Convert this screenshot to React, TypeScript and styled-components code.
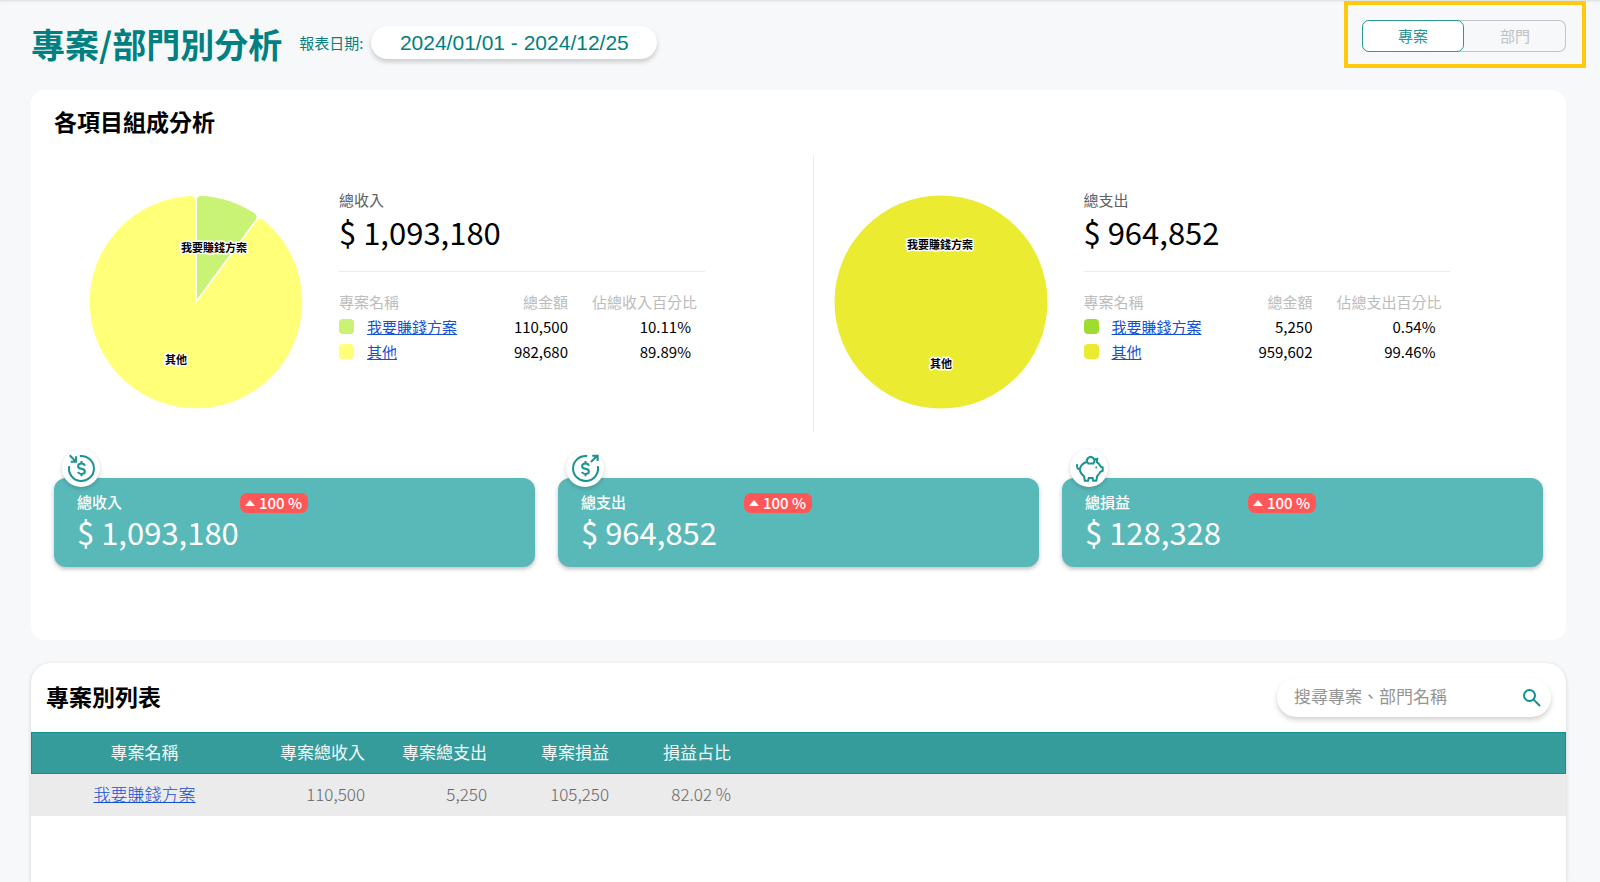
import React, { useState } from "react";
import styled, { createGlobalStyle, css } from "styled-components";

const GlobalStyle = createGlobalStyle`
  *, *::before, *::after { box-sizing: border-box; }
  body {
    margin: 0;
    background: #f7f8fa;
    color: #000;
    font-family: "Noto Sans CJK TC", "Noto Sans", sans-serif;
    font-size: 15px;
    line-height: 24px;
  }
  h1, h2, p { margin: 0; }
  button, input { font: inherit; }
`;

const Page = styled.div`
  display: flex;
  flex-direction: column;
  min-height: 100vh;
  padding: 0 34px 0 31px;
  box-shadow: inset 0 3px 3px -2px rgba(0, 0, 0, 0.12);
`;

const Header = styled.header`
  display: flex;
  align-items: center;
  justify-content: space-between;
  height: 90px;
`;

const HeaderGroup = styled.div`
  display: flex;
  align-items: center;
`;

const PageTitle = styled.h1`
  margin-bottom: 2px;
  color: #008080;
  font-size: 34px;
  line-height: 44px;
  font-weight: 700;
  white-space: nowrap;
`;

const DateLabel = styled.label`
  margin: 0 8px 4px 17px;
  color: #0b7f7f;
`;

const DateInput = styled.input`
  width: 286px;
  height: 33px;
  margin-bottom: 5px;
  padding: 0;
  border: 0;
  border-radius: 17px;
  background: #fff;
  color: #007f7f;
  font-family: "Liberation Sans", Arial, sans-serif;
  font-size: 21px;
  text-align: center;
  box-shadow: 0 3px 5px rgba(0, 0, 0, 0.18);
`;

const SwitchFrame = styled.div`
  position: relative;
  margin-bottom: 18px;

  &::after {
    content: "";
    position: absolute;
    inset: -19px -20px -16px -18px;
    border: 4px solid #ffc90e;
    pointer-events: none;
  }
`;

const SwitchGroup = styled.div`
  display: flex;
  height: 32px;
  border-radius: 7px;
  box-shadow: inset 0 0 0 1px #c2c4c6;
`;

const SwitchButton = styled.button<{ $active: boolean }>`
  width: 102px;
  padding: 0;
  border: 1px solid transparent;
  border-radius: 7px;
  background: transparent;
  color: #c0c0c0;
  cursor: pointer;
  ${(p) =>
    p.$active &&
    css`
      border-color: #2a9999;
      background: #fff;
      color: #2a9494;
    `}
`;

const Panel = styled.section`
  margin-bottom: 23px;
  padding: 17px 23px 73px;
  border-radius: 14px;
  background: #fff;
`;

const SectionTitle = styled.h2`
  padding-bottom: 3px;
  font-size: 23px;
  line-height: 28px;
  font-weight: 700;
`;

const Charts = styled.div`
  display: grid;
  grid-template-columns: 1fr 1fr;
  margin-top: 17px;
`;

const ChartBlock = styled.div<{ $divided?: boolean }>`
  display: flex;
  height: 277px;
  padding: 40px 0 0 35px;
  ${(p) =>
    p.$divided &&
    css`
      margin-left: 14px;
      padding-left: 20px;
      border-left: 1px solid #ececec;
    `}
`;

const Pie = styled.svg`
  flex: none;
  width: 214px;
  height: 214px;
  margin-right: 36px;
  overflow: visible;
`;

const PieLabel = styled.text`
  font-size: 11px;
  font-weight: 700;
  text-anchor: middle;
  dominant-baseline: central;
  stroke: #fff;
  stroke-width: 3px;
  stroke-linejoin: round;
  paint-order: stroke;
`;

const Summary = styled.div`
  width: 366px;
`;

const SummaryLabel = styled.p`
  line-height: 20px;
  margin-top: -5px;
  color: #606060;
`;

const SummaryAmount = styled.p`
  padding: 1px 0 18px;
  border-bottom: 1px solid #ebebeb;
  font-size: 31px;
  line-height: 42px;
`;

const Breakdown = styled.table`
  width: 100%;
  margin-top: 17px;
  border-collapse: collapse;
  table-layout: fixed;

  th, td {
    height: 25px;
    padding: 0;
    line-height: 25px;
    font-weight: 400;
    text-align: right;
    white-space: nowrap;
  }
  th { color: #bcbcbc; }
  th:first-child, td:first-child { width: 129px; text-align: left; }
  th:nth-child(2), td:nth-child(2) { width: 100px; }
  th:last-child { padding-right: 8px; }
  td:last-child { padding-right: 14px; }
`;

const NameCell = styled.span`
  display: flex;
  align-items: center;
  gap: 13px;
`;

const Swatch = styled.span<{ $color: string }>`
  width: 15px;
  height: 15px;
  border-radius: 4px;
  background: ${(p) => p.$color};
`;

const Link = styled.a`
  color: #1450d2;
  text-decoration: underline;
`;

const Cards = styled.div`
  display: grid;
  grid-template-columns: repeat(3, 1fr);
  gap: 23px;
  margin-top: 46px;
`;

const Card = styled.article`
  position: relative;
  display: grid;
  grid-template-columns: 163px 1fr;
  align-content: start;
  height: 89px;
  padding: 14px 23px 0;
  border-radius: 12px;
  background: #59b9b9;
  color: #fff;
  box-shadow: 0 2px 4px rgba(0, 0, 0, 0.25);
`;

const CardIcon = styled.span`
  position: absolute;
  top: -29px;
  left: 8px;
  display: flex;
  align-items: center;
  justify-content: center;
  width: 38px;
  height: 38px;
  border-radius: 50%;
  background: #fff;
  box-shadow: 0 2px 4px rgba(0, 0, 0, 0.18);
`;

const Glyph = styled.svg`
  width: 27px;
  height: 27px;
  fill: none;
  stroke: #1c9393;
  stroke-width: 6;
  overflow: visible;
`;

const CardLabel = styled.p`
  line-height: 20px;
  font-weight: 500;
`;

const CardAmount = styled.p`
  grid-column: 1 / -1;
  font-size: 31px;
  line-height: 38px;
`;

const Tag = styled.span`
  display: inline-flex;
  align-items: center;
  justify-self: start;
  gap: 4px;
  height: 20px;
  margin-top: 1px;
  padding: 0 6px 0 5px;
  border-radius: 7px;
  background: #ff5757;
  font-weight: 500;
  line-height: 20px;
`;

const Caret = styled.svg`
  width: 10px;
  height: 6px;
  fill: #fff;
`;

const ListPanel = styled.section`
  flex: 1;
  min-height: 219px;
  border-radius: 20px 20px 0 0;
  background: #fff;
  box-shadow: 0 1px 4px rgba(0, 0, 0, 0.16);
`;

const ListHeader = styled.div`
  display: flex;
  align-items: center;
  justify-content: space-between;
  height: 69px;
  padding: 0 15px;
`;

const SearchBox = styled.div`
  display: flex;
  align-items: center;
  width: 274px;
  height: 39px;
  padding: 0 7px 0 17px;
  border-radius: 20px;
  background: #fff;
  box-shadow: 0 3px 5px rgba(0, 0, 0, 0.18);
`;

const SearchInput = styled.input`
  flex: 1;
  min-width: 0;
  padding: 0 0 3px;
  border: 0;
  outline: 0;
  background: transparent;
  font-size: 17px;
  &::placeholder { color: #949494; opacity: 1; }
`;

const SearchButton = styled.button`
  display: flex;
  padding: 0;
  border: 0;
  background: transparent;
  color: #0d9090;
  cursor: pointer;
`;

const SearchGlyph = styled.svg`
  width: 24px;
  height: 24px;
  fill: none;
  stroke: currentColor;
  stroke-width: 2;
`;

const ProjectTable = styled.table`
  width: 100%;
  border-collapse: collapse;
  table-layout: fixed;
  font-size: 17px;

  th, td {
    width: 122px;
    height: 42px;
    padding: 0 15px 2px 0;
    font-weight: 300;
    text-align: right;
    white-space: nowrap;
  }
  th:first-child, td:first-child { width: 227px; padding: 0 0 2px; text-align: center; }
  th:last-child, td:last-child { width: auto; }
  thead tr { background: #369b9b; color: #f2fafa; box-shadow: inset 0 0 0 1px #0f9090; }
  th { font-weight: 400; }
  tbody tr { background: #ebebeb; color: #666; }
`;

const RADIUS = 107;
const CORNER = 6;

/** Outline of a pie slice with rounded outer corners; angles are in degrees, clockwise from the top. */
function slicePath(from: number, to: number) {
  const at = (deg: number, r: number) => {
    const a = ((deg - 90) * Math.PI) / 180;
    return `${(RADIUS + r * Math.cos(a)).toFixed(2)} ${(RADIUS + r * Math.sin(a)).toFixed(2)}`;
  };
  const d = (CORNER / RADIUS) * (180 / Math.PI);
  const large = to - from > 180 ? 1 : 0;
  return [
    `M${RADIUS} ${RADIUS}`,
    `L${at(from, RADIUS - CORNER)}`,
    `Q${at(from, RADIUS)} ${at(from + d, RADIUS)}`,
    `A${RADIUS} ${RADIUS} 0 ${large} 1 ${at(to - d, RADIUS)}`,
    `Q${at(to, RADIUS)} ${at(to, RADIUS - CORNER)}`,
    "Z",
  ].join(" ");
}

const DOLLAR =
  "M40 18V25M40 56V63M50 32C49 28 45 25 40 25C34 25 30 28 30 33C30 38 34 40 40 41C46 42 50 44 50 49C50 54 46 56 40 56C35 56 31 54 30 50";

const IncomeIcon = () => (
  <Glyph viewBox="0 0 80 80" aria-hidden="true">
    <path d="M35 3.3A37 37 0 1 1 3.5 33" />
    <path d="M5 1L23 19M24 4V20H8" />
    <path d={DOLLAR} />
  </Glyph>
);

const ExpenseIcon = () => (
  <Glyph viewBox="0 0 80 80" aria-hidden="true">
    <path d="M76.5 33A37 37 0 1 1 45 3.3" />
    <path d="M56 21L74 3M60 2H76V18" />
    <path d={DOLLAR} />
  </Glyph>
);

const ProfitIcon = () => (
  <Glyph viewBox="0 0 80 80" aria-hidden="true">
    <path d="M32 21C21 24 14 31 11 42C12 51 17 58 24 63L26 76H36L38 68H49L51 76H60L63 62C67 58 70 54 72 50L79 47V37L73 34C71 29 67 24 62 21L63 11C60 11 56 12 54 15" />
    <path d="M34 25H54M35 24A11 11 0 1 1 52 24M11 42C5 42 1 37 4 27" />
    <circle cx="60" cy="37" r="3" fill="#1c9393" stroke="none" />
  </Glyph>
);

type Item = { name: string; amount: string; percent: string; color: string };

function SummaryBlock(props: { label: string; amount: string; percentTitle: string; items: Item[] }) {
  return (
    <Summary>
      <SummaryLabel>{props.label}</SummaryLabel>
      <SummaryAmount>{props.amount}</SummaryAmount>
      <Breakdown>
        <thead>
          <tr>
            <th scope="col">專案名稱</th>
            <th scope="col">總金額</th>
            <th scope="col">{props.percentTitle}</th>
          </tr>
        </thead>
        <tbody>
          {props.items.map((item) => (
            <tr key={item.name}>
              <td>
                <NameCell>
                  <Swatch $color={item.color} />
                  <Link href="#">{item.name}</Link>
                </NameCell>
              </td>
              <td>{item.amount}</td>
              <td>{item.percent}</td>
            </tr>
          ))}
        </tbody>
      </Breakdown>
    </Summary>
  );
}

const incomeItems: Item[] = [
  { name: "我要賺錢方案", amount: "110,500", percent: "10.11%", color: "#c8f374" },
  { name: "其他", amount: "982,680", percent: "89.89%", color: "#ffff78" },
];

const expenseItems: Item[] = [
  { name: "我要賺錢方案", amount: "5,250", percent: "0.54%", color: "#a0dc2d" },
  { name: "其他", amount: "959,602", percent: "99.46%", color: "#ebeb32" },
];

const cards = [
  { label: "總收入", amount: "$ 1,093,180", Icon: IncomeIcon },
  { label: "總支出", amount: "$ 964,852", Icon: ExpenseIcon },
  { label: "總損益", amount: "$ 128,328", Icon: ProfitIcon },
];

export default function App() {
  const [view, setView] = useState("專案");
  const [range, setRange] = useState("2024/01/01 - 2024/12/25");
  const [query, setQuery] = useState("");
  const split = 36.4;

  return (
    <>
      <GlobalStyle />
      <Page>
        <Header>
          <HeaderGroup>
            <PageTitle>專案/部門別分析</PageTitle>
            <DateLabel htmlFor="range">報表日期:</DateLabel>
            <DateInput id="range" value={range} onChange={(e) => setRange(e.target.value)} />
          </HeaderGroup>
          <SwitchFrame>
            <SwitchGroup>
              {["專案", "部門"].map((name) => (
                <SwitchButton
                  key={name}
                  type="button"
                  $active={view === name}
                  aria-pressed={view === name}
                  onClick={() => setView(name)}
                >
                  {name}
                </SwitchButton>
              ))}
            </SwitchGroup>
          </SwitchFrame>
        </Header>

        <Panel>
          <SectionTitle>各項目組成分析</SectionTitle>
          <Charts>
            <ChartBlock>
              <Pie viewBox="0 0 214 214" role="img" aria-label="總收入">
                <g stroke="#fff" strokeWidth="1.5">
                  <path d={slicePath(0, split)} fill="#c8f374" />
                  <path d={slicePath(split, 360)} fill="#ffff78" />
                </g>
                <PieLabel x="125" y="52">我要賺錢方案</PieLabel>
                <PieLabel x="87" y="164">其他</PieLabel>
              </Pie>
              <SummaryBlock
                label="總收入"
                amount="$ 1,093,180"
                percentTitle="佔總收入百分比"
                items={incomeItems}
              />
            </ChartBlock>
            <ChartBlock $divided>
              <Pie viewBox="0 0 214 214" role="img" aria-label="總支出">
                <circle cx="107" cy="107" r="106.5" fill="#ebeb32" />
                <PieLabel x="106" y="49">我要賺錢方案</PieLabel>
                <PieLabel x="107" y="168">其他</PieLabel>
              </Pie>
              <SummaryBlock
                label="總支出"
                amount="$ 964,852"
                percentTitle="佔總支出百分比"
                items={expenseItems}
              />
            </ChartBlock>
          </Charts>
          <Cards>
            {cards.map(({ label, amount, Icon }) => (
              <Card key={label}>
                <CardIcon>
                  <Icon />
                </CardIcon>
                <CardLabel>{label}</CardLabel>
                <Tag>
                  <Caret viewBox="0 0 10 6" aria-hidden="true">
                    <path d="M0 6L5 0L10 6Z" />
                  </Caret>
                  100 %
                </Tag>
                <CardAmount>{amount}</CardAmount>
              </Card>
            ))}
          </Cards>
        </Panel>

        <ListPanel>
          <ListHeader>
            <SectionTitle>專案別列表</SectionTitle>
            <SearchBox>
              <SearchInput
                type="text"
                aria-label="搜尋專案、部門名稱"
                placeholder="搜尋專案、部門名稱"
                value={query}
                onChange={(e) => setQuery(e.target.value)}
              />
              <SearchButton type="button" aria-label="搜尋">
                <SearchGlyph viewBox="0 0 24 24" aria-hidden="true">
                  <circle cx="9.5" cy="9.5" r="5.5" />
                  <path d="M13.6 13.6L20 20" />
                </SearchGlyph>
              </SearchButton>
            </SearchBox>
          </ListHeader>
          <ProjectTable>
            <thead>
              <tr>
                <th scope="col">專案名稱</th>
                <th scope="col">專案總收入</th>
                <th scope="col">專案總支出</th>
                <th scope="col">專案損益</th>
                <th scope="col">損益占比</th>
                <th />
              </tr>
            </thead>
            <tbody>
              <tr>
                <td>
                  <Link href="#">我要賺錢方案</Link>
                </td>
                <td>110,500</td>
                <td>5,250</td>
                <td>105,250</td>
                <td>82.02 %</td>
                <td />
              </tr>
            </tbody>
          </ProjectTable>
        </ListPanel>
      </Page>
    </>
  );
}
